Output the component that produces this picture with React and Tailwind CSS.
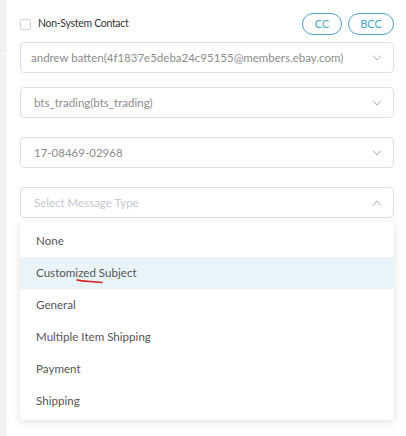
import { useState } from "react";

const options = [
  "None",
  "Customized Subject",
  "General",
  "Multiple Item Shipping",
  "Payment",
  "Shipping",
];

const Chevron = ({ up }) => (
  <svg width="10" height="6" viewBox="0 0 10 6" className="shrink-0">
    <path
      d={up ? "M1 5.5 L5 1 L9 5.5" : "M1 0.5 L5 5 L9 0.5"}
      fill="none"
      stroke="#a8abb2"
      strokeWidth="1"
    />
  </svg>
);

const SelectBox = ({ value, placeholder, open, tight }) => (
  <div
    className={`h-[31px] border border-[#dcdfe6] rounded-[4px] bg-white flex items-center justify-between pr-[11px] ${
      tight ? "pl-[10px]" : "pl-[13px]"
    }`}
  >
    <span
      className={`text-[11.5px] whitespace-nowrap truncate ${value ? "text-[#8c8c8c]" : "text-[#c4c7cc]"}`}
    >
      {value || placeholder}
    </span>
    <Chevron up={open} />
  </div>
);

export default function App() {
  const [checked, setChecked] = useState(false);

  return (
    <div
      className="flex h-[436px] w-[406px] bg-white overflow-hidden"
      style={{ fontFamily: 'Lato, "Noto Sans", sans-serif' }}
    >
      <div className="w-[7px] bg-[#f2f3f5] flex flex-col">
        <div className="h-[51px] border-b border-[#e4e6ea]" />
      </div>

      <div className="flex-1 pl-[13px] pr-[12px]">
        {/* top row */}
        <div className="flex items-center justify-between pt-[13px] h-[35px]">
          <label className="flex items-center gap-[7px] cursor-pointer">
            <span
              onClick={() => setChecked(!checked)}
              className="w-[11px] h-[11px] border border-[#d0d3d9] rounded-[2px] bg-white"
            />
            <span className="text-[10.5px] tracking-[-0.3px] text-[#333]">
              Non-System Contact
            </span>
          </label>
          <div className="flex gap-[6px]">
            <button className="w-[40px] h-[22px] rounded-full border border-[#4ba3cc] text-[#4ba3cc] text-[11px]">
              CC
            </button>
            <button className="w-[46px] h-[22px] rounded-full border border-[#4ba3cc] text-[#4ba3cc] text-[11px]">
              BCC
            </button>
          </div>
        </div>

        <div className="mt-[7px]">
          <SelectBox value="andrew batten(4f1837e5deba24c95155@members.ebay.com)" tight />
        </div>
        <div className="flex flex-col gap-[19px] mt-[14px]">
          <SelectBox value="bts_trading(bts_trading)" />
          <SelectBox value="17-08469-02968" />
          <div>
            <SelectBox placeholder="Select Message Type" open />
            <div className="mt-[4px] bg-white rounded-[4px] shadow-[0_2px_10px_rgba(0,0,0,0.12)] py-[3px]">
              {options.map((o) => (
                <div
                  key={o}
                  className={`h-[32px] flex items-center pl-[16px] text-[11.6px] text-[#555] ${
                    o === "Customized Subject" ? "bg-[#e9f4f9]" : ""
                  }`}
                >
                  {o === "Customized Subject" ? (
                    <span className="relative">
                      Customized Subject
                      <svg
                        width="28"
                        height="6"
                        viewBox="0 0 28 6"
                        className="absolute left-[40px] top-[14px]"
                      >
                        <path
                          d="M1 2 Q8 3.5 14 3.5 Q20 3.8 26 4.5"
                          fill="none"
                          stroke="#d21f1f"
                          strokeWidth="1.6"
                          strokeLinecap="round"
                        />
                      </svg>
                    </span>
                  ) : (
                    o
                  )}
                </div>
              ))}
            </div>
          </div>
        </div>
      </div>
    </div>
  );
}
